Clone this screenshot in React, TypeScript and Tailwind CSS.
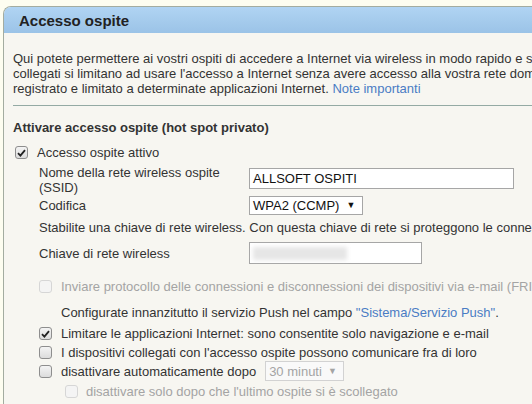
import React from 'react';

// Small checkbox drawn like the classic router UI control
function Box({ checked = false, disabled = false }: { checked?: boolean; disabled?: boolean }) {
  return (
    <span
      className={`inline-flex items-center justify-center w-[13px] h-[13px] shrink-0 rounded-[3px] border ${
        disabled
          ? 'border-[#d6d6d6] bg-[#f4f4f4]'
          : 'border-[#8e8e8e] bg-gradient-to-b from-[#f4f4f4] to-[#dcdcdc]'
      }`}
    >
      {checked && (
        <svg width="9" height="8" viewBox="0 0 9 8">
          <path d="M1 4.2 L3.4 6.6 L8 1.2" fill="none" stroke="#222" strokeWidth="1.8" />
        </svg>
      )}
    </span>
  );
}

export default function App() {
  return (
    <div
      className="w-[532px] h-[404px] overflow-hidden bg-[#fdfdf0] pt-[6px] pl-[3px] text-[13px] leading-[15px] text-[#333]"
      style={{ fontFamily: '"Liberation Sans", Arial, sans-serif' }}
    >
      <div className="w-[720px] h-[420px] rounded-tl-[8px] border-t border-l border-[#a3aca0] bg-[#f7f6f1] overflow-hidden">
        {/* Header band */}
        <div className="h-[26px] flex items-center pl-[15px] bg-gradient-to-b from-[#b0d4f3] to-[#9bc3e7] text-[15px] font-bold text-[#222]">
          Accesso ospite
        </div>

        <div className="pl-[9px] pt-[18px]">
          <p className="whitespace-nowrap">
            Qui potete permettere ai vostri ospiti di accedere a Internet via wireless in modo rapido e semplice. I dispositivi
            <br />
            collegati si limitano ad usare l'accesso a Internet senza avere accesso alla vostra rete domestica. L'accesso viene
            <br />
            registrato e limitato a determinate applicazioni Internet.{' '}
            <span className="text-[#4a7cc4]">Note importanti</span>
          </p>

          <div className="mt-[9px] h-px bg-[#94aaa4]" />

          <div className="mt-[14px] font-bold">Attivare accesso ospite (hot spot privato)</div>

          <div className="mt-[10px] flex items-center gap-[9px] pl-[2px]">
            <Box checked />
            <span>Accesso ospite attivo</span>
          </div>

          <div className="pl-[26px]">
            {/* SSID */}
            <div className="mt-[5px] flex items-start">
              <div className="w-[210px]">
                Nome della rete wireless ospite
                <br />
                (SSID)
              </div>
              <div className="mt-[3px] w-[265px] h-[21px] border border-[#a6a6a6] bg-white pl-[3px] flex items-center text-[#111]">
                ALLSOFT OSPITI
              </div>
            </div>

            {/* Codifica */}
            <div className="mt-[1px] flex items-center h-[19px]">
              <div className="w-[210px]">Codifica</div>
              <div className="w-[114px] h-[19px] border border-[#a6a6a6] bg-white pl-[3px] flex items-center gap-[7px] text-[#111]">
                WPA2 (CCMP)
                <span className="text-[9px]">▼</span>
              </div>
            </div>

            <div className="mt-[5px] whitespace-nowrap">
              Stabilite una chiave di rete wireless. Con questa chiave di rete si proteggono le connessioni wireless.
            </div>

            {/* Chiave */}
            <div className="mt-[7px] flex items-center h-[22px]">
              <div className="w-[210px]">Chiave di rete wireless</div>
              <div className="w-[173px] h-[22px] border border-[#a6a6a6] bg-white flex items-center pl-[3px]">
                <div className="w-[94px] h-[13px] bg-[#e6e6e6] blur-[2px]" />
              </div>
            </div>
          </div>

          <div className="pl-[26px]">
            <div className="mt-[15px] flex items-center gap-[9px] text-[#a4a4a4] whitespace-nowrap">
              <Box disabled />
              <span>Inviare protocollo delle connessioni e disconnessioni dei dispositivi via e-mail (FRITZ!Box Push Service)</span>
            </div>

            <div className="mt-[11px] pl-[22px] whitespace-nowrap">
              Configurate innanzitutto il servizio Push nel campo{' '}
              <span className="text-[#4a7cc4]">"Sistema/Servizio Push"</span>.
            </div>

            <div className="mt-[6px] flex items-center gap-[9px] whitespace-nowrap">
              <Box checked />
              <span>Limitare le applicazioni Internet: sono consentite solo navigazione e e-mail</span>
            </div>

            <div className="mt-[4px] flex items-center gap-[9px] whitespace-nowrap">
              <Box />
              <span>I dispositivi collegati con l'accesso ospite possono comunicare fra di loro</span>
            </div>

            <div className="flex items-center h-[20px] mt-[1px] whitespace-nowrap">
              <div className="flex items-center gap-[9px]">
                <Box />
                <span>disattivare automaticamente dopo</span>
              </div>
              <div className="ml-[9px] w-[79px] h-[20px] border border-[#d2d2d2] bg-[#f9f9f9] pl-[3px] flex items-center gap-[6px] text-[#a4a4a4]">
                30 minuti
                <span className="text-[9px]">▼</span>
              </div>
            </div>

            <div className="mt-[3px] pl-[26px] flex items-center gap-[8px] text-[#a4a4a4] whitespace-nowrap">
              <Box disabled />
              <span>disattivare solo dopo che l'ultimo ospite si è scollegato</span>
            </div>
          </div>
        </div>
      </div>
    </div>
  );
}
